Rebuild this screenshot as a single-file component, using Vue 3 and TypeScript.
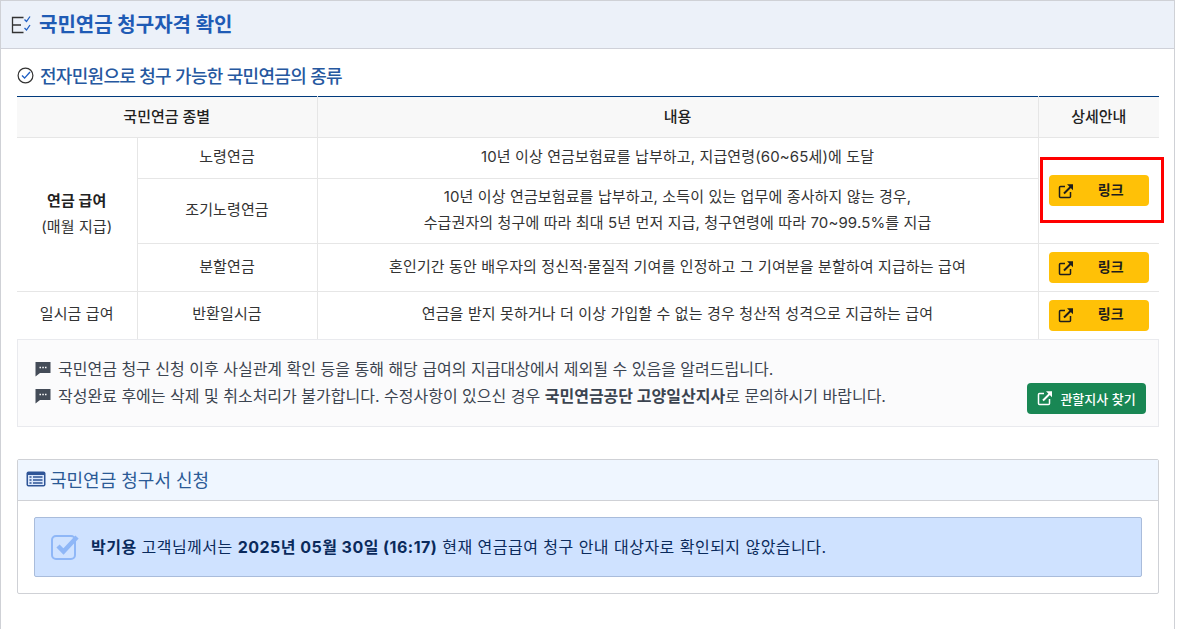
<script setup lang="ts">
const notes = ['국민연금 청구 신청 이후 사실관계 확인 등을 통해 해당 급여의 지급대상에서 제외될 수 있음을 알려드립니다.']
</script>

<template>
  <div class="page">
    <header class="top">
      <svg class="top-ico" width="20" height="20" viewBox="0 0 20 20" fill="none">
        <path d="M12.500 2.500H1.500v15h11M1.500 10H10" stroke="#333" stroke-width="1.300" />
        <path d="M13.500 4.500l2 2 3.500-5M13.500 13l2 2 3.500-5" stroke="#1f5fc4" stroke-width="1.300" />
      </svg>
      <h1>국민연금 청구자격 확인</h1>
    </header>
    <section class="body">
      <h2>
        <svg width="17" height="17" viewBox="0 0 17 17" fill="none">
          <circle cx="8.500" cy="8.500" r="7.400" stroke="#333" stroke-width="1.200" />
          <path d="M5 8.500l2.600 2.600L13 5" stroke="#1f5fc4" stroke-width="1.400" />
        </svg>
        전자민원으로 청구 가능한 국민연금의 종류
      </h2>
      <div class="table-wrap">
        <table>
          <colgroup>
            <col class="c1" /><col class="c2" /><col class="c3" /><col class="c4" />
          </colgroup>
          <thead>
            <tr>
              <th colspan="2">국민연금 종별</th>
              <th>내용</th>
              <th class="last">상세안내</th>
            </tr>
          </thead>
          <tbody>
            <tr class="r1">
              <td rowspan="3" class="kind"><b>연금 급여</b><br />(매월 지급)</td>
              <td>노령연금</td>
              <td>10년 이상 연금보험료를 납부하고, 지급연령(60~65세)에 도달</td>
              <td rowspan="2" class="last">
                <a class="link"><svg class="ext" viewBox="0 0 16 16" fill="none"><path d="M7 3.500H2.500a1 1 0 0 0-1 1v9a1 1 0 0 0 1 1h9a1 1 0 0 0 1-1V9" stroke="currentColor" stroke-width="1.500" /><path d="M6 10.500L13 3.500" stroke="currentColor" stroke-width="2" /><path d="M9 1.200h6v6z" fill="currentColor" /></svg><span>링크</span></a>
              </td>
            </tr>
            <tr class="r2">
              <td>조기노령연금</td>
              <td>10년 이상 연금보험료를 납부하고, 소득이 있는 업무에 종사하지 않는 경우,<br />수급권자의 청구에 따라 최대 5년 먼저 지급, 청구연령에 따라 70~99.5%를 지급</td>
            </tr>
            <tr class="r3">
              <td>분할연금</td>
              <td>혼인기간 동안 배우자의 정신적·물질적 기여를 인정하고 그 기여분을 분할하여 지급하는 급여</td>
              <td class="last">
                <a class="link"><svg class="ext" viewBox="0 0 16 16" fill="none"><path d="M7 3.500H2.500a1 1 0 0 0-1 1v9a1 1 0 0 0 1 1h9a1 1 0 0 0 1-1V9" stroke="currentColor" stroke-width="1.500" /><path d="M6 10.500L13 3.500" stroke="currentColor" stroke-width="2" /><path d="M9 1.200h6v6z" fill="currentColor" /></svg><span>링크</span></a>
              </td>
            </tr>
            <tr class="r4">
              <td>일시금 급여</td>
              <td>반환일시금</td>
              <td>연금을 받지 못하거나 더 이상 가입할 수 없는 경우 청산적 성격으로 지급하는 급여</td>
              <td class="last">
                <a class="link"><svg class="ext" viewBox="0 0 16 16" fill="none"><path d="M7 3.500H2.500a1 1 0 0 0-1 1v9a1 1 0 0 0 1 1h9a1 1 0 0 0 1-1V9" stroke="currentColor" stroke-width="1.500" /><path d="M6 10.500L13 3.500" stroke="currentColor" stroke-width="2" /><path d="M9 1.200h6v6z" fill="currentColor" /></svg><span>링크</span></a>
              </td>
            </tr>
          </tbody>
        </table>
        <div class="redbox"></div>
      </div>
      <div class="notice">
        <p v-for="n in notes" :key="n"><svg class="msg" viewBox="0 0 16 16"><path d="M0.500 1h15v11H5l-4.500 3.500z" fill="#444c58" /><path d="M4.500 6.500h1.500M7.300 6.500h1.500M10 6.500h1.500" stroke="#fff" stroke-width="1.500" /></svg>{{ n }}</p>
        <p><svg class="msg" viewBox="0 0 16 16"><path d="M0.500 1h15v11H5l-4.500 3.500z" fill="#444c58" /><path d="M4.500 6.500h1.500M7.300 6.500h1.500M10 6.500h1.500" stroke="#fff" stroke-width="1.500" /></svg>작성완료 후에는 삭제 및 취소처리가 불가합니다. 수정사항이 있으신 경우 <b>국민연금공단 고양일산지사</b>로 문의하시기 바랍니다.</p>
        <a class="find"><svg class="ext" viewBox="0 0 16 16" fill="none"><path d="M7 3.500H2.500a1 1 0 0 0-1 1v9a1 1 0 0 0 1 1h9a1 1 0 0 0 1-1V9" stroke="currentColor" stroke-width="1.500" /><path d="M6 10.500L13 3.500" stroke="currentColor" stroke-width="2" /><path d="M9 1.200h6v6z" fill="currentColor" /></svg>관할지사 찾기</a>
      </div>
      <div class="apply">
        <div class="apply-head">
          <svg width="20" height="16" viewBox="0 0 20 16"><rect x="0.500" y="0.500" width="19" height="15" rx="2" fill="#2f5597" /><rect x="2" y="4" width="16" height="10" fill="#dbe7fb" /><path d="M3.500 6h2M3.500 9h2M3.500 12h2M7 6h9.500M7 9h9.500M7 12h9.500" stroke="#2f5597" stroke-width="1.300" /></svg>
          <span>국민연금 청구서 신청</span>
        </div>
        <div class="apply-body">
          <div class="alert">
            <svg width="30" height="30" viewBox="0 0 30 30" fill="none">
              <rect x="2" y="4" width="23" height="23" rx="4" stroke="#8fb7f7" stroke-width="2" />
              <path d="M8 14l5.500 5.500L27 5" stroke="#8fb7f7" stroke-width="4.500" />
            </svg>
            <p><b>박기용</b> 고객님께서는 <b>2025년 05월 30일 (16:17)</b> 현재 연금급여 청구 안내 대상자로 확인되지 않았습니다.</p>
          </div>
        </div>
      </div>
    </section>
  </div>
</template>

<style>
html, body { margin: 0; background: #fff; overflow: hidden; }
</style>

<style scoped>
.page {
  width: 1175px;
  height: 629px;
  box-sizing: border-box;
  border: 1px solid #cfd1d6;
  border-bottom: 0;
  font-family: Inter, "Noto Sans CJK KR", sans-serif;
  color: #333;
  font-size: 15px;
  background: #fff;
}
.top {
  height: 48px;
  box-sizing: border-box;
  display: flex;
  align-items: center;
  gap: 8px;
  padding: 0 0 0 10px;
  background: #ecf1f9;
  border-bottom: 1px solid #cfd1d9;
}
.top h1 {
  margin: 0;
  font-size: 20px;
  line-height: 28px;
  font-weight: 700;
  color: #1f5bb5;
}
.body { padding: 16px 15px 0 16px; }
h2 {
  margin: 0;
  height: 31px;
  box-sizing: border-box;
  padding-bottom: 11px;
  display: flex;
  align-items: center;
  gap: 6px;
  font-size: 18px;
  font-weight: 500;
  color: #26589f;
  letter-spacing: -0.7px;
}
.table-wrap { position: relative; }
table {
  width: 1142px;
  border-collapse: collapse;
  table-layout: fixed;
  border-top: 1px solid #003a7d;
}
.c1 { width: 120px; }
.c2 { width: 180px; }
.c3 { width: 721px; }
.c4 { width: 121px; }
th {
  box-sizing: border-box;
  height: 41px;
  padding: 0 0 3px;
  background: #f8f8f8;
  font-size: 15px;
  font-weight: 500;
  color: #222;
  border: 1px solid #e6e6e6;
  border-top: 0;
  border-left: 0;
}
td {
  box-sizing: border-box;
  padding: 0 0 2px;
  text-align: center;
  font-size: 15px;
  line-height: 26px;
  letter-spacing: 0.12px;
  color: #333;
  border: 1px solid #e6e6e6;
  border-left: 0;
}
td.last { padding-bottom: 0; border-right: 0; }
th.last { border-right: 0; }
.r1 td { height: 41px; }
.r2 td { height: 65px; }
.r3 td { height: 48px; }
.r4 td { height: 47px; border-bottom: 0; }
.kind b { font-weight: 700; color: #222; }
.link {
  margin: 0 auto;
  width: 100px;
  height: 31px;
  box-sizing: border-box;
  padding: 0 9px;
  display: flex;
  align-items: center;
  background: #ffc107;
  border-radius: 4px;
  color: #1d1d1d;
  font-size: 14px;
  font-weight: 700;
  letter-spacing: 0;
}
.link span { flex: 1; text-align: center; padding: 0 0 2px 8px; }
.ext { width: 16px; height: 16px; flex: none; }
.redbox {
  position: absolute;
  left: 1023px;
  top: 61px;
  width: 124px;
  height: 66px;
  box-sizing: border-box;
  border: 3px solid #f00;
}
.notice {
  position: relative;
  width: 1142px;
  height: 88px;
  box-sizing: border-box;
  padding: 16px 17px 0;
  background: #fbfbfc;
  border: 1px solid #e9eaee;
  font-size: 16px;
  color: #3c4450;
}
.notice p {
  margin: 0;
  height: 27px;
  line-height: 27px;
  white-space: nowrap;
}
.notice b { font-weight: 700; }
.msg { width: 16px; height: 16px; margin-right: 7px; vertical-align: -2px; }
.find {
  position: absolute;
  right: 12px;
  top: 43px;
  width: 119px;
  height: 31px;
  display: flex;
  align-items: center;
  justify-content: center;
  gap: 7px;
  background: #198754;
  color: #fff;
  border-radius: 4px;
  font-size: 13px;
  font-weight: 500;
}
.apply {
  margin-top: 32px;
  width: 1142px;
  box-sizing: border-box;
  border: 1px solid #cfd1d6;
  border-radius: 2px;
}
.apply-head {
  height: 41px;
  box-sizing: border-box;
  padding: 0 0 2px 8px;
  display: flex;
  align-items: center;
  gap: 4px;
  background: #eff6ff;
  border-bottom: 1px solid #cfd1d6;
  font-size: 18px;
  color: #2b5a96;
}
.apply-body { padding: 16px; }
.alert {
  height: 60px;
  box-sizing: border-box;
  padding-left: 15px;
  display: flex;
  align-items: center;
  gap: 11px;
  background: #cfe2ff;
  border: 1px solid #a9bcdb;
  border-radius: 2px;
}
.alert p {
  margin: 0 0 2px;
  font-size: 16px;
  letter-spacing: 0.47px;
  color: #0a2a5c;
}
.alert b { font-weight: 700; }
</style>
